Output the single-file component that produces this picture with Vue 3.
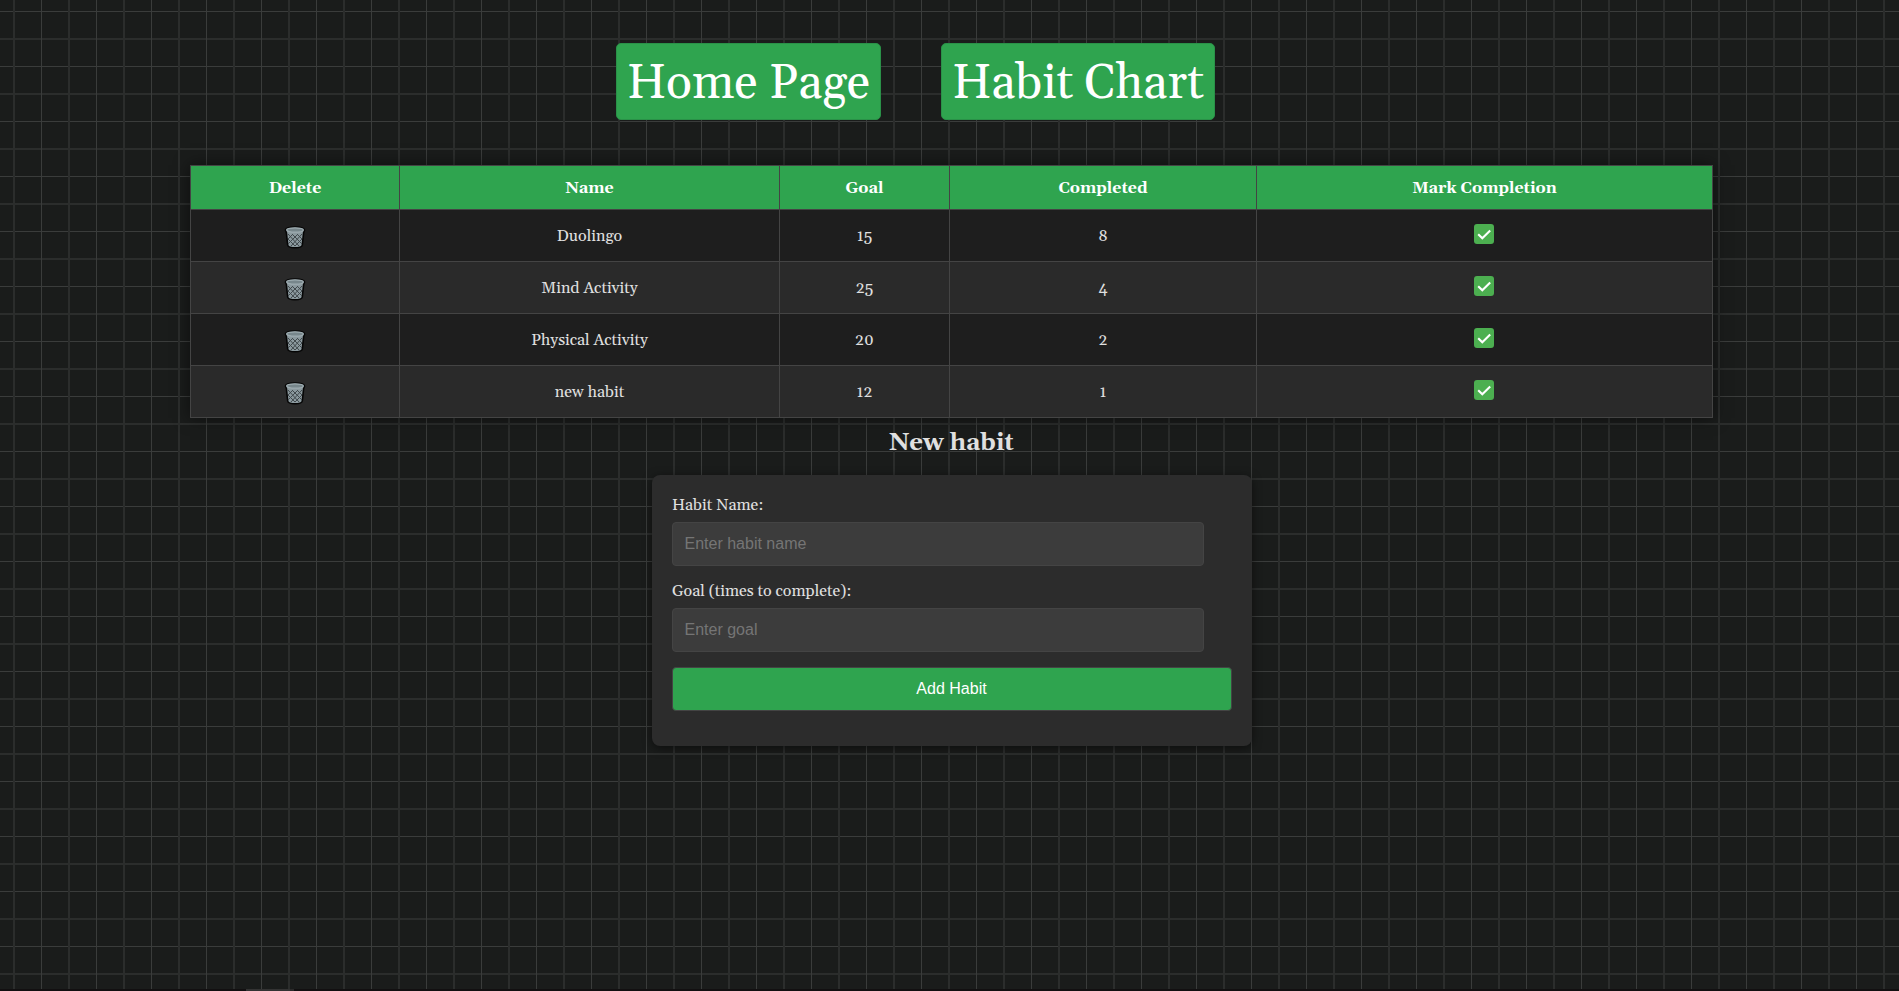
<script setup>
const columns = ['Delete', 'Name', 'Goal', 'Completed', 'Mark Completion']
const habits = [
  { name: 'Duolingo', goal: 15, completed: 8 },
  { name: 'Mind Activity', goal: 25, completed: 4 },
  { name: 'Physical Activity', goal: 20, completed: 2 },
  { name: 'new habit', goal: 12, completed: 1 },
]
</script>

<template>
  <div class="page">
    <nav class="nav">
      <a class="link home">Home Page</a>
      <a class="link chart">Habit Chart</a>
    </nav>
    <table class="habits">
      <colgroup><col class="c1"><col class="c2"><col class="c3"><col class="c4"><col class="c5"></colgroup>
      <thead><tr><th v-for="c in columns" :key="c">{{ c }}</th></tr></thead>
      <tbody>
        <tr v-for="h in habits" :key="h.name">
          <td>
            <svg class="trash" width="22" height="24" viewBox="0 0 22 24">
              <path d="M1.5 5C1.5 .9 20.5 .9 20.5 5L19.6 7.6 18.3 20C17.8 23.6 4.2 23.6 3.7 20L2.4 7.6Z" fill="#8b999e" stroke="#050505" stroke-width="1.6" />
              <path d="M4 9 15 21M4 14 11 21M8 9 18 19M13 9 18 14M18 9 7 21M18 14 11 21M14 9 4 19M9 9 4 14" stroke="#41494d" stroke-width="1" />
              <ellipse cx="11" cy="5" rx="8.3" ry="2.2" fill="#77868b" stroke="#9eacb1" stroke-width="1.3" />
            </svg>
          </td>
          <td>{{ h.name }}</td>
          <td>{{ h.goal }}</td>
          <td>{{ h.completed }}</td>
          <td>
            <svg class="check" width="20" height="20" viewBox="0 0 20 20">
              <rect width="20" height="20" rx="3" fill="#4caf50" />
              <path d="M4.2 10.2 8.3 14.3 16.2 6.5" fill="none" stroke="#fff" stroke-width="2.1" />
            </svg>
          </td>
        </tr>
      </tbody>
    </table>
    <h2>New habit</h2>
    <form class="card" @submit.prevent>
      <label>Habit Name:</label>
      <input type="text" placeholder="Enter habit name">
      <label>Goal (times to complete):</label>
      <input type="text" placeholder="Enter goal">
      <button>Add Habit</button>
    </form>
    <div class="strip"><i></i></div>
  </div>
</template>

<style>
body { background: #1a1c1b; overflow: hidden; }
</style>
<style scoped>
.page {
  position: relative; box-sizing: border-box; width: 1899px; height: 991px; padding-top: 43px; overflow: hidden;
  font-family: Georgia, Gelasio, "Liberation Serif", serif; font-size: 16px; color: #e0e0e0;
  background-color: #1a1c1b;
  background-image:
    linear-gradient(90deg, transparent 13px, #2b2d2c 13px, #2b2d2c 15px, transparent 15px, transparent 41px, #3a3c3b 41px, #3a3c3b 42px, transparent 42px),
    linear-gradient(transparent 11px, #3a3c3b 11px, #3a3c3b 12px, transparent 12px, transparent 38px, #2b2d2c 38px, #2b2d2c 40px, transparent 40px);
  background-size: 55px 55px;
}
.nav { display: flex; gap: 60px; margin-left: 616px; height: 77px; }
.link { box-sizing: border-box; height: 77px; padding-top: 2px; border: 1px solid #2a9148; border-radius: 5px; background: #2fa44f; color: #fff; font-size: 48px; line-height: 75px; text-align: center; white-space: nowrap; }
.home { width: 265px; }
.chart { width: 274px; }
.habits { table-layout: fixed; width: 1523px; margin: 45px 0 0 190px; border-collapse: collapse; box-shadow: 0 0 15px rgba(0,0,0,.5); }
.c1 { width: 209px; } .c2 { width: 380px; } .c3 { width: 170px; } .c4 { width: 307px; }
th, td { border: 1px solid #444; padding: 0; text-align: center; }
th { height: 43px; background: #2fa44f; color: #fff; }
td { height: 51px; background: #1e1e1e; }
tr:nth-child(even) td { background: #2a2a2a; }
svg { display: block; margin: 0 auto; }
.trash { position: relative; top: 1px; }
.check { position: relative; top: -2px; left: -1px; }
h2 { margin: 11px 0 0; padding-left: 4px; font-size: 24px; line-height: 28px; text-align: center; }
.card { box-sizing: border-box; width: 600px; height: 271px; margin: 18px 0 0 652px; padding: 21px 20px 20px; border-radius: 8px; background: #2c2c2c; box-shadow: 0 2px 10px rgba(0,0,0,.5); }
label { display: block; height: 18px; line-height: 18px; margin-bottom: 8px; }
input { display: block; box-sizing: border-box; width: 532px; height: 44px; margin: 0 0 16px; padding: 0 11.5px; border: 1px solid #444; border-radius: 4px; background: #3c3c3c; font: 16px "Liberation Sans", Arial, sans-serif; }
input::placeholder { color: #757575; }
button { display: block; width: 560px; height: 44px; margin-top: -1px; padding: 0 1px 0 0; border: 1px solid #444; border-radius: 4px; background: #2fa44f; color: #fff; font: 16px "Liberation Sans", Arial, sans-serif; }
.strip { position: absolute; left: 0; bottom: 0; width: 100%; height: 2px; background: #121011; }
.strip i { display: block; width: 44px; height: 2px; margin-left: 246px; background: #333; border-right: 4px solid #2a2a2a; }
</style>
